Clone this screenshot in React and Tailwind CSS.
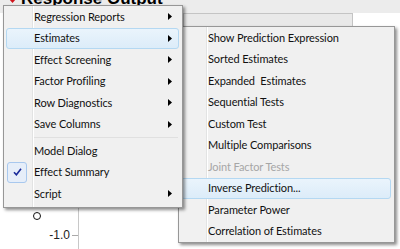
import React from 'react';

const mainItems = [
    { label: 'Regression Reports', sub: true },
    { label: 'Estimates', sub: true, active: true },
    { label: 'Effect Screening', sub: true },
    { label: 'Factor Profiling', sub: true },
    { label: 'Row Diagnostics', sub: true },
    { label: 'Save Columns', sub: true },
    { divider: true },
    { label: 'Model Dialog' },
    { label: 'Effect Summary', checked: true },
    { label: 'Script', sub: true },
];

const subItems = [
    { label: 'Show Prediction Expression' },
    { label: 'Sorted Estimates' },
    { label: 'Expanded\u00a0 Estimates' },
    { label: 'Sequential Tests' },
    { label: 'Custom Test' },
    { label: 'Multiple Comparisons' },
    { label: 'Joint Factor Tests', disabled: true },
    { label: 'Inverse Prediction...', active: true },
    { label: 'Parameter Power' },
    { label: 'Correlation of Estimates' },
];

function Arrow() {
    return (
        <svg width="4" height="7" viewBox="0 0 4 7" className="shrink-0">
            <path d="M0 0 L4 3.5 L0 7 Z" fill="#000" />
        </svg>
    );
}

function Check() {
    return (
        <div className="flex h-full w-[20px] items-center justify-center rounded-[3px] border border-[#a8c8ee] bg-[#e6eef9]">
            <svg width="9" height="8" viewBox="0 0 9 8">
                <path d="M1 4.2 L3.4 6.8 L8 0.8" fill="none" stroke="#1a2a9a" strokeWidth="1.6" />
            </svg>
        </div>
    );
}

function MenuRow({ item, iconWidth }) {
    if (item.divider) {
        return (
            <div className="flex h-[5px] items-center" style={{ paddingLeft: iconWidth + 2 }}>
                <div className="mr-[4px] h-[2px] flex-1 border-t border-[#e0e0e0] border-b-white" />
            </div>
        );
    }
    return (
        <div
            className={
                item.active
                    ? 'ml-[2px] mr-[3px] flex h-[21.5px] items-center rounded-[3px] border border-[#b4d8f2] bg-[linear-gradient(#eaf4fc,#dcecf9)]'
                    : 'flex h-[21.5px] items-center'
            }
        >
            <div
                className="flex h-full shrink-0 items-stretch"
                style={{ width: item.active ? iconWidth - 1 : iconWidth + 2 }}
            >
                {item.checked && (
                    <div className="ml-[3px] flex h-full">
                        <Check />
                    </div>
                )}
            </div>
            <span
                className={
                    item.disabled ? 'flex-1 whitespace-nowrap text-[#a6a6a6]' : 'flex-1 whitespace-nowrap text-[#111]'
                }
            >
                {item.label}
            </span>
            {item.sub && (
                <div className={item.active ? 'pr-[6px]' : 'pr-[10px]'}>
                    <Arrow />
                </div>
            )}
        </div>
    );
}

function Menu({ items, className, iconWidth }) {
    return (
        <div
            className={`absolute border border-[#979797] shadow-[2px_2px_3px_rgba(0,0,0,0.45)] ${className}`}
            style={{
                background: `linear-gradient(to right, #f1f1f1 ${iconWidth}px, #e2e3e3 ${iconWidth}px, #e2e3e3 ${iconWidth + 1}px, #fff ${iconWidth + 1}px, #fff ${iconWidth + 2}px, #f0f0f0 ${iconWidth + 2}px)`,
            }}
        >
            {items.map((item, i) => (
                <MenuRow key={i} item={item} iconWidth={iconWidth} />
            ))}
        </div>
    );
}

export default function App() {
    return (
        <div className="relative h-[249px] w-[400px] overflow-hidden bg-white font-['Lato',sans-serif] text-[11px] tracking-[-0.1px]">
            <div className="flex h-[13px] items-start overflow-hidden bg-[#ececec] pl-[9px]">
                <svg width="7" height="5" viewBox="0 0 7 5" className="mt-[-1px]">
                    <path d="M0 0 L7 0 L3.5 4 Z" fill="#d0141c" />
                </svg>
                <span className="ml-[5px] mt-[-10px] whitespace-nowrap font-['Liberation_Sans',sans-serif] text-[17px] font-bold leading-[17px] tracking-normal text-black">
                    Response Output
                </span>
            </div>
            <div className="flex h-[236px]">
                <div className="flex w-[79px] flex-col justify-end border-r border-[#c8c8c8] pb-[5px]">
                    <div className="mb-[6px] ml-[33px] h-[8px] w-[8px] rounded-full border-[1.5px] border-[#111]" />
                    <div className="flex items-center justify-end">
                        <span className="font-['Liberation_Sans',sans-serif] text-[12px] tracking-normal text-[#222]">-1.0</span>
                        <div className="ml-[2px] h-px w-[6px] bg-[#aaa]" />
                    </div>
                </div>
                <div className="flex-1 pl-[104px]">
                    <div className="h-[60px] w-[170px] border border-[#c4c4c4] bg-[#e9e9e9]" />
                </div>
            </div>

            <Menu items={subItems} iconWidth={27} className="left-[178px] top-[26px] w-[217px]" />
            <Menu items={mainItems} iconWidth={28} className="left-[3px] top-[5px] w-[180px] pb-[2px]" />
        </div>
    );
}
